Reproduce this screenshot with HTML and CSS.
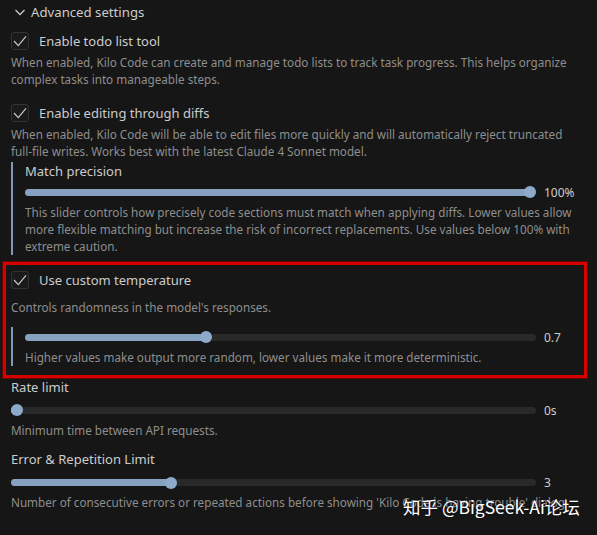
FILE: index.html
```html
<!DOCTYPE html>
<html lang="en">
<head>
<meta charset="utf-8">
<title>Advanced settings</title>
<link rel="stylesheet" href="styles.css">
</head>
<body>
<div class="page">
  <div class="header">
    <svg class="chevron" width="20" height="20" viewBox="0 0 20 20"><path d="M4.5 8 L9 12.5 L13.5 8" fill="none" stroke="#c8c8c8" stroke-width="1.3"/></svg>
    <span>Advanced settings</span>
  </div>

  <div class="check-row first">
    <span class="box"><svg width="16" height="16" viewBox="0 0 16 16"><polyline points="2,8 6.3,12.7 14,3.3" fill="none" stroke="#c8c8c8" stroke-width="1.2"/></svg></span>
    <span>Enable todo list tool</span>
  </div>
  <p class="desc">When enabled, Kilo Code can create and manage todo lists to track task progress. This helps organize complex tasks into manageable steps.</p>

  <div class="check-row second">
    <span class="box"><svg width="16" height="16" viewBox="0 0 16 16"><polyline points="2,8 6.3,12.7 14,3.3" fill="none" stroke="#c8c8c8" stroke-width="1.2"/></svg></span>
    <span>Enable editing through diffs</span>
  </div>
  <p class="desc">When enabled, Kilo Code will be able to edit files more quickly and will automatically reject truncated <span class="nowrap">full-file</span> writes. Works best with the latest Claude 4 Sonnet model.</p>

  <div class="group group-precision">
    <div class="label">Match precision</div>
    <div class="slider slider-top">
      <div class="track"><div class="fill" style="width: calc(6px + (100% - 12px) * 1)"></div><div class="thumb" style="left: calc(6px + (100% - 12px) * 1)"></div></div>
      <span class="value">100%</span>
    </div>
    <p class="desc">This slider controls how precisely code sections must match when applying diffs. Lower values allow more flexible matching but increase the risk of incorrect replacements. Use values below 100% with extreme caution.</p>
  </div>

  <div class="highlight">
    <div class="check-row">
      <span class="box"><svg width="16" height="16" viewBox="0 0 16 16"><polyline points="2,8 6.3,12.7 14,3.3" fill="none" stroke="#c8c8c8" stroke-width="1.2"/></svg></span>
      <span>Use custom temperature</span>
    </div>
    <p class="desc temp-desc">Controls randomness in the model's responses.</p>
    <div class="group group-temp">
      <div class="slider">
        <div class="track"><div class="fill" style="width: calc(6px + (100% - 12px) * 0.35)"></div><div class="thumb" style="left: calc(6px + (100% - 12px) * 0.35)"></div></div>
        <span class="value">0.7</span>
      </div>
      <p class="desc">Higher values make output more random, lower values make it more deterministic.</p>
    </div>
  </div>

  <div class="label rate-label">Rate limit</div>
  <div class="slider slider-gap">
    <div class="track"><div class="fill" style="width: calc(6px + (100% - 12px) * 0)"></div><div class="thumb" style="left: calc(6px + (100% - 12px) * 0)"></div></div>
    <span class="value">0s</span>
  </div>
  <p class="desc">Minimum time between API requests.</p>

  <div class="label error-label">Error &amp; Repetition Limit</div>
  <div class="slider slider-gap2">
    <div class="track"><div class="fill" style="width: calc(6px + (100% - 12px) * 0.3)"></div><div class="thumb" style="left: calc(6px + (100% - 12px) * 0.3)"></div></div>
    <span class="value">3</span>
  </div>
  <p class="desc">Number of consecutive errors or repeated actions before showing 'Kilo Code is having trouble' dialog</p>
</div>
<div class="watermark">知乎 @BigSeek-Ai论坛</div>
</body>
</html>
```
FILE: styles.css
```css
html, body {
  margin: 0;
  padding: 0;
}
body {
  background: #161616;
  font-family: "Noto Sans", "Noto Sans CJK SC", sans-serif;
  width: 597px;
  height: 535px;
  overflow: hidden;
  position: relative;
}
.page {
  padding: 2px 10px 0 11px;
  display: flex;
  flex-direction: column;
}
.header {
  display: flex;
  align-items: center;
  height: 20px;
  font-size: 13.2px;
  color: #cccccc;
}
.chevron {
  flex: none;
}
.check-row {
  display: flex;
  align-items: center;
  gap: 10px;
  height: 18px;
  font-size: 13px;
  color: #cccccc;
}
.check-row.first {
  margin-top: 10px;
}
.check-row.second {
  margin-top: 16.5px;
}
.box {
  width: 18px;
  height: 18px;
  box-sizing: border-box;
  border: 1px solid #333333;
  border-radius: 3px;
  background: #1a1a1a;
  display: flex;
  align-items: center;
  justify-content: center;
  flex: none;
}
.desc {
  margin: 3.5px 0 0 0;
  font-size: 11.7px;
  line-height: 17px;
  color: #8e8e8e;
}
.nowrap {
  white-space: nowrap;
}
.label {
  font-size: 13px;
  line-height: 18px;
  height: 18px;
  color: #cccccc;
}
.group {
  border-left: 2px solid #7f9ab8;
  padding-left: 12px;
  display: flex;
  flex-direction: column;
}
.group .desc {
  margin-top: 1.5px;
}
.group-precision {
  margin-top: 2.5px;
}
.slider {
  display: flex;
  align-items: center;
  gap: 8px;
  height: 20px;
}
.slider-top {
  margin-top: 2px;
}
.track {
  flex: 1;
  height: 7px;
  border-radius: 4px;
  background: #292929;
  position: relative;
}
.fill {
  height: 100%;
  border-radius: 4px;
  background: #87a2c0;
}
.thumb {
  position: absolute;
  top: 50%;
  width: 12px;
  height: 12px;
  border-radius: 50%;
  background: #8eaacb;
  transform: translate(-50%, -50%);
}
.value {
  width: 43px;
  flex: none;
  font-size: 12px;
  color: #cccccc;
}
.highlight {
  margin: 7.5px 0 0 -8px;
  padding: 6px 0 9.5px 5px;
  border: 3px solid #d50000;
  box-shadow: 0 0 0 1px rgba(120, 0, 0, 0.8);
  display: flex;
  flex-direction: column;
}
.highlight .value {
  width: 40px;
}
.desc.temp-desc {
  margin-top: 10px;
}
.group-temp {
  margin-top: 11px;
}
.rate-label {
  margin-top: 0;
}
.slider-gap {
  margin-top: 4px;
}
.slider-gap + .desc,
.slider-gap2 + .desc {
  margin-top: 1.5px;
}
.error-label {
  margin-top: 11.5px;
}
.slider-gap2 {
  margin-top: 4.5px;
}
.watermark {
  position: absolute;
  left: 403px;
  top: 493px;
  font-family: "Noto Sans CJK SC", "Noto Sans", sans-serif;
  font-size: 17.5px;
  line-height: 28px;
  color: #ffffff;
  text-shadow: 0 0 2px rgba(0, 0, 0, 0.6);
  white-space: nowrap;
}
```
